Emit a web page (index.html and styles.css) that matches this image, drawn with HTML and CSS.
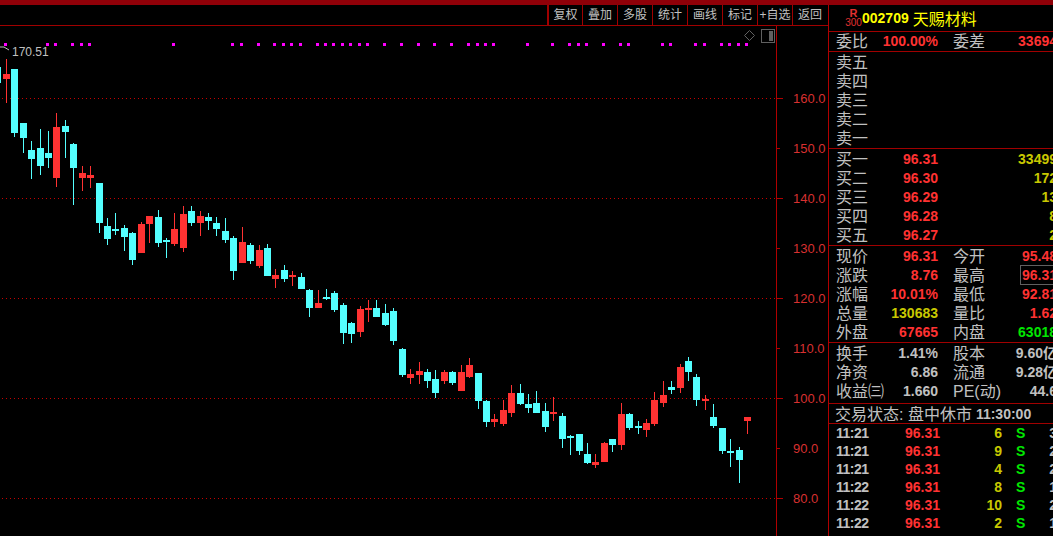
FILE: index.html
```html
<!DOCTYPE html>
<html lang="zh-CN">
<head>
    <meta charset="UTF-8">
    <title>002709 天赐材料</title>
    <link rel="stylesheet" href="styles.css">
</head>
<body>
    <div class="top-bar"></div>
    <div class="main">
        <div class="left">
            <div class="toolbar">
                <a class="tool">复权</a>
                <a class="tool">叠加</a>
                <a class="tool">多股</a>
                <a class="tool">统计</a>
                <a class="tool">画线</a>
                <a class="tool">标记</a>
                <a class="tool">+自选</a>
                <a class="tool">返回</a>
            </div>
            <div class="chart">
                <svg id="kline" class="kline" width="828" height="510" viewBox="0 26 828 510" shape-rendering="crispEdges">
                    <g id="grid"></g>
                    <g id="dots"></g>
                    <g id="candles"></g>
                    <polyline class="peak-mark" points="0,47 4,47 9,50" fill="none" shape-rendering="auto"></polyline>
                    <text class="peak-text" x="12" y="56">170.51</text>
                    <path class="chart-icon" d="M749.5 30.500 L754.500 35.500 L749.500 40.500 L744.500 35.500 Z" fill="none" shape-rendering="auto"></path>
                    <rect class="chart-icon" x="761.500" y="29.500" width="13" height="13" fill="none"></rect>
                    <rect class="chart-fill" x="769" y="31" width="4" height="10"></rect>
                </svg>
            </div>
        </div>
        <div class="panel">
            <div class="stock-head">
                <div class="board"><span class="board-r">R</span><span class="board-n">300</span></div>
                <span class="code">002709</span>
                <span class="name">天赐材料</span>
            </div>

            <div class="block ratio">
                <div class="row"><span>委比</span><b class="red">100.00%</b><span>委差</span><b class="red">33694</b></div>
            </div>

            <div class="block">
                <div class="row"><span>卖五</span></div>
                <div class="row"><span>卖四</span></div>
                <div class="row"><span>卖三</span></div>
                <div class="row"><span>卖二</span></div>
                <div class="row"><span>卖一</span></div>
            </div>

            <div class="block">
                <div class="row"><span>买一</span><b class="red">96.31</b><i></i><b class="yellow">33499</b></div>
                <div class="row"><span>买二</span><b class="red">96.30</b><i></i><b class="yellow">172</b></div>
                <div class="row"><span>买三</span><b class="red">96.29</b><i></i><b class="yellow">13</b></div>
                <div class="row"><span>买四</span><b class="red">96.28</b><i></i><b class="yellow">8</b></div>
                <div class="row"><span>买五</span><b class="red">96.27</b><i></i><b class="yellow">2</b></div>
            </div>

            <div class="block">
                <div class="row"><span>现价</span><b class="red">96.31</b><span>今开</span><b class="red">95.48</b></div>
                <div class="row"><span>涨跌</span><b class="red">8.76</b><span>最高</span><b class="red"><em class="boxed">96.31</em></b></div>
                <div class="row"><span>涨幅</span><b class="red">10.01%</b><span>最低</span><b class="red">92.81</b></div>
                <div class="row"><span>总量</span><b class="yellow">130683</b><span>量比</span><b class="red">1.62</b></div>
                <div class="row"><span>外盘</span><b class="red">67665</b><span>内盘</span><b class="green">63018</b></div>
            </div>

            <div class="block basics">
                <div class="row"><span>换手</span><b>1.41%</b><span>股本</span><b>9.60亿</b></div>
                <div class="row"><span>净资</span><b>6.86</b><span>流通</span><b>9.28亿</b></div>
                <div class="row"><span>收益㈢</span><b>1.660</b><span>PE(动)</span><b>44.6</b></div>
            </div>

            <div class="block status">
                <span>交易状态: 盘中休市</span><b>11:30:00</b>
            </div>

            <div class="ticks">
                <div class="tick"><b>11:21</b><b class="red">96.31</b><b class="yellow">6</b><b class="green">S</b><b>3</b></div>
                <div class="tick"><b>11:21</b><b class="red">96.31</b><b class="yellow">9</b><b class="green">S</b><b>2</b></div>
                <div class="tick"><b>11:21</b><b class="red">96.31</b><b class="yellow">4</b><b class="green">S</b><b>2</b></div>
                <div class="tick"><b>11:22</b><b class="red">96.31</b><b class="yellow">8</b><b class="green">S</b><b>1</b></div>
                <div class="tick"><b>11:22</b><b class="red">96.31</b><b class="yellow">10</b><b class="green">S</b><b>2</b></div>
                <div class="tick"><b>11:22</b><b class="red">96.31</b><b class="yellow">2</b><b class="green">S</b><b>1</b></div>
            </div>
        </div>
    </div>

    <script src="script.js"></script>
</body>
</html>
```

FILE: styles.css
```css
body {
    margin: 0;
    padding: 0;
    width: 1053px;
    height: 536px;
    overflow: hidden;
    background-color: #000;
    color: #c0c0c0;
    font-family: "Liberation Sans", "Noto Sans CJK SC", sans-serif;
}
.top-bar {
    height: 5px;
    background-color: #8f0008;
}
.main {
    display: flex;
    height: 531px;
}
.left {
    width: 828px;
    flex-shrink: 0;
}
.toolbar {
    display: flex;
    justify-content: flex-end;
    height: 20px;
    padding-right: 1px;
    border-bottom: 1px solid #a00000;
}
.tool {
    width: 35px;
    box-sizing: border-box;
    border-left: 1px solid #a00000;
    font-size: 12px;
    line-height: 20px;
    text-align: center;
    white-space: nowrap;
}
.tool:first-child {
    border-left-width: 2px;
}
.kline {
    display: block;
}
.grid-line {
    stroke: #c80000;
    stroke-width: 1;
    stroke-dasharray: 1 3;
}
.axis-line {
    fill: #b00000;
}
.axis-text {
    fill: #d83030;
    font-size: 13px;
    font-family: "Liberation Sans", sans-serif;
}
.peak-mark {
    stroke: #c0c0c0;
}
.peak-text {
    fill: #c0c0c0;
    font-size: 12px;
}
.chart-icon {
    stroke: #606060;
}
.chart-fill {
    fill: #606060;
}
.dot {
    fill: #ff00ff;
}
.up {
    fill: #ff3232;
}
.down {
    fill: #54ffff;
}
.panel {
    flex: 1;
    overflow: hidden;
    border-left: 1px solid #b00000;
    font-size: 16px;
}
.stock-head {
    display: flex;
    align-items: center;
    height: 26px;
    border-bottom: 1px solid #a00000;
}
.board {
    display: flex;
    flex-direction: column;
    align-items: center;
    width: 17px;
    margin-left: 16px;
    color: #e03030;
    line-height: 10px;
}
.board-r {
    font-size: 11px;
    font-weight: bold;
}
.board-n {
    font-size: 10px;
}
.code {
    color: #ffff00;
    font-size: 14px;
    font-weight: bold;
}
.name {
    margin-left: 4px;
    color: #ffff00;
    font-size: 16px;
}
.block {
    padding-top: 1px;
    border-bottom: 1px solid #a00000;
}
.ratio {
    padding-top: 0;
}
.basics {
    padding-bottom: 2px;
}
.row {
    display: grid;
    grid-template-columns: 40px 62px 55px 64px;
    width: 221px;
    height: 19px;
    padding-left: 7px;
    line-height: 19px;
    white-space: nowrap;
}
.row span:nth-child(3) {
    margin-left: 15px;
}
.row b {
    font-size: 14px;
    text-align: right;
}
.row b:last-child {
    margin-left: -14px;
}
.row i {
    display: block;
}
.boxed {
    font-style: normal;
    outline: 1px solid #606060;
    outline-offset: 1px;
}
.status {
    display: flex;
    height: 18px;
    padding-left: 6px;
    line-height: 19px;
    white-space: nowrap;
}
.status b {
    margin-left: 4px;
    font-size: 14px;
}
.tick {
    display: grid;
    grid-template-columns: 50px 54px 62px 14px 41px;
    width: 221px;
    height: 18px;
    padding-left: 7px;
    font-size: 14px;
    line-height: 18px;
}
.tick b:first-child {
    letter-spacing: -0.5px;
}
.tick b:nth-child(2),
.tick b:nth-child(3),
.tick b:nth-child(5) {
    text-align: right;
}
.tick b:nth-child(4) {
    margin-left: 14px;
}
.red {
    color: #ff3232;
}
.yellow {
    color: #c8c800;
}
.green {
    color: #00e600;
}
```

FILE: script.js
```js
// x, high, low, body top, body bottom, r = up / c = down
var candles = [
    [-3,67,83,67,83,'c'], [6,59,103,74,79,'r'], [14,69,137,69,133,'c'], [23,123,153,123,138,'c'],
    [31,141,179,150,159,'c'], [40,129,175,148,166,'c'], [48,131,168,153,158,'c'], [56,113,187,127,178,'r'],
    [65,120,158,126,132,'c'], [73,143,205,144,168,'c'], [82,166,191,173,178,'r'], [90,166,188,175,178,'r'],
    [99,183,233,183,223,'c'], [107,218,245,226,239,'c'], [115,213,235,229,231,'c'], [124,225,251,228,237,'c'],
    [132,232,265,233,260,'c'], [141,222,253,224,253,'r'], [149,216,243,216,224,'r'], [158,210,247,217,243,'c'],
    [166,238,258,240,242,'c'], [174,213,246,229,244,'r'], [183,206,252,214,248,'r'], [191,206,226,211,223,'c'],
    [200,211,236,216,223,'r'], [208,213,230,217,221,'c'], [216,217,236,223,229,'c'], [225,218,243,231,240,'c'],
    [233,236,280,238,271,'c'], [242,227,263,242,263,'r'], [250,243,264,245,261,'c'], [259,245,268,250,266,'r'],
    [267,244,276,248,276,'c'], [275,269,288,275,279,'r'], [284,265,282,270,279,'c'], [292,271,286,275,277,'r'],
    [301,273,289,277,289,'c'], [309,289,317,290,308,'c'], [318,290,308,303,308,'r'], [326,289,300,297,299,'c'],
    [334,291,312,293,310,'c'], [343,303,344,305,333,'c'], [351,322,343,323,334,'c'], [360,306,337,309,332,'r'],
    [368,300,322,308,310,'r'], [376,300,317,308,317,'c'], [385,304,326,313,325,'c'], [393,308,345,311,341,'c'],
    [402,348,377,349,375,'c'], [410,369,384,374,378,'r'], [419,362,384,371,375,'r'], [427,369,388,372,381,'c'],
    [435,370,398,379,393,'c'], [444,370,384,372,381,'r'], [452,371,385,372,383,'c'], [461,365,391,372,391,'r'],
    [469,358,378,365,377,'r'], [478,373,409,373,401,'c'], [486,400,427,401,422,'c'], [494,414,427,419,422,'r'],
    [503,400,426,410,424,'r'], [511,385,417,393,413,'r'], [520,384,405,393,404,'c'], [528,394,413,404,408,'c'],
    [536,391,413,403,413,'c'], [545,403,432,411,427,'c'], [553,397,421,412,414,'r'], [562,413,448,416,439,'c'],
    [570,435,455,436,438,'c'], [579,434,455,434,451,'c'], [587,443,464,454,463,'c'], [595,454,468,462,465,'r'],
    [604,442,462,443,462,'r'], [612,439,452,439,445,'c'], [621,403,450,414,445,'r'], [629,413,430,414,428,'c'],
    [638,421,434,426,428,'c'], [646,419,437,423,430,'r'], [654,392,426,400,424,'r'], [663,381,407,395,403,'r'],
    [671,381,394,387,390,'c'], [680,364,393,367,388,'r'], [688,357,381,361,372,'c'], [696,374,406,377,400,'c'],
    [705,395,410,399,401,'r'], [713,404,428,417,426,'c'], [722,428,454,428,451,'c'], [730,439,467,451,453,'c'],
    [739,447,483,450,460,'c'], [747,417,434,417,421,'r']
];

var dotXs = [5, 47, 55, 72, 81, 89, 173, 232, 241, 258, 274, 283, 291, 300, 317, 325, 333, 342, 350, 359, 367,
    384, 401, 418, 434, 451, 468, 477, 485, 493, 527, 552, 569, 578, 586, 603, 620, 628, 662, 670, 695, 704,
    721, 729, 738, 746];

var NS = 'http://www.w3.org/2000/svg';

function add(parent, tag, attrs, text) {
    var el = document.createElementNS(NS, tag);
    for (var k in attrs) el.setAttribute(k, attrs[k]);
    if (text) el.textContent = text;
    parent.appendChild(el);
}

var grid = document.getElementById('grid');
add(grid, 'rect', { 'class': 'axis-line', x: 776, y: 26, width: 1, height: 510 });
for (var i = 0; i < 9; i++) {
    var y = 98 + i * 50;
    var major = i % 2 === 0;
    if (major) add(grid, 'line', { 'class': 'grid-line', x1: 2, y1: y + 0.5, x2: 776, y2: y + 0.5 });
    add(grid, 'rect', { 'class': 'axis-line', x: 777, y: y, width: major ? 6 : 3, height: 1 });
    add(grid, 'text', { 'class': 'axis-text', x: 793, y: y + 5 }, (160 - i * 10).toFixed(1));
}

var dots = document.getElementById('dots');
dotXs.forEach(function (x) {
    add(dots, 'rect', { 'class': 'dot', x: x - 1, y: 43, width: 3, height: 3 });
});

var g = document.getElementById('candles');
candles.forEach(function (c) {
    var cls = c[5] === 'r' ? 'up' : 'down';
    add(g, 'rect', { 'class': cls, x: c[0], y: c[1], width: 1, height: c[2] - c[1] });
    add(g, 'rect', { 'class': cls, x: c[0] - 3, y: c[3], width: 7, height: c[4] - c[3] });
});
```
